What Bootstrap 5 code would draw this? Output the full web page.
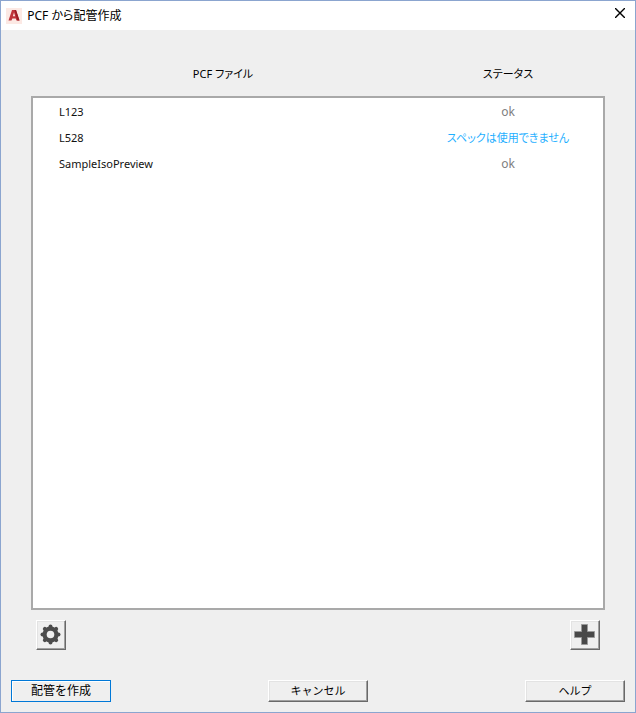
<!DOCTYPE html>
<html lang="ja">
<head>
<meta charset="utf-8">
<meta name="viewport" content="width=device-width, initial-scale=1">
<title>PCF から配管作成</title>
<link href="https://cdn.jsdelivr.net/npm/bootstrap@5.3.0/dist/css/bootstrap.min.css" rel="stylesheet">
<style>
body { font-family: "Noto Sans", "Noto Sans CJK JP", sans-serif; font-size: 12px; line-height: 18px; color: #000; font-feature-settings: "palt"; }
.dialog { background: #efefef; border: 1px solid #8ba5cf; }
.title-bar { height: 29px; padding: 0 10px 0 5px; }
.title-text { font-size: 12px; font-weight: 400; line-height: 18px; }
.close-btn { margin-bottom: 6px; }
.files-area { padding: 34px 30px 0; }
.files thead { height: 32px; padding: 0 2px; }
.files th { font-weight: 400; font-size: 11px; }
.files td { padding: 0; }
.files tbody { border: 2px solid #a9a9a9; background: #fff; padding-top: 1px; }
.files tbody tr { line-height: 26px; }
.files .file-name { padding-left: 26px; color: #111; font-size: 11px; }
.status-ok { color: #808080; }
.status-link { color: #1fb0ff; font-size: 11px; }
.kana { font-size: 11px; }
.tools { padding: 10px 35px 0; }
.raised { background: #efefef; border: 1px solid; border-color: #fff #696969 #696969 #fff; box-shadow: inset -1px -1px #a0a0a0, inset 1px 1px #e3e3e3; padding: 0; color: #000; }
.tool-btn { width: 30px; height: 30px; padding: 0 1px 1px 0; }
.actions { padding: 30px 10px 10px; }
.action-btn { width: 100px; height: 22px; }
.default-btn { border-color: #0078d7; box-shadow: inset 1px 1px #fff; }
</style>
<script src="https://cdn.jsdelivr.net/npm/bootstrap@5.3.0/dist/js/bootstrap.bundle.min.js"></script>
</head>
<body>
<main class="dialog min-vh-100 d-flex flex-column">
  <header class="title-bar bg-white d-flex align-items-center">
    <svg class="me-1" width="16" height="16" viewBox="0 0 16 16" aria-hidden="true">
      <rect width="16" height="16" fill="#fce9e4"/>
      <path d="M6 2h4l3.500 10.500h-3l-.8-2H6.300l-.8 2h-3zM8 4.500 6.900 8.300h2.200z" fill="#c0343a" fill-rule="evenodd"/>
      <path d="M8.500 2H10l3.500 10.500h-2.200z" fill="#9c1c25"/>
    </svg>
    <h1 class="title-text my-0 me-auto">&#8202;PCF から配管作成</h1>
    <button type="button" class="close-btn border-0 bg-transparent p-0 d-flex" aria-label="閉じる">
      <svg width="10" height="10" viewBox="0 0 10 10" stroke="#000" stroke-width="1.4"><path d="M0 0l10 10M10 0L0 10"/></svg>
    </button>
  </header>

  <section class="files-area flex-fill d-flex flex-column">
    <table class="files flex-fill d-flex flex-column w-100">
      <thead class="d-block">
        <tr class="row g-0">
          <th scope="col" class="col-8 text-center">PCF ファイル</th>
          <th scope="col" class="col-4 text-center">ステータス</th>
        </tr>
      </thead>
      <tbody class="flex-fill d-block">
        <tr class="row g-0"><td class="col-8 file-name">L123</td><td class="col-4 text-center status-ok">ok</td></tr>
        <tr class="row g-0"><td class="col-8 file-name">L528</td><td class="col-4 text-center"><a href="#" class="status-link text-decoration-none">スペックは使用できません</a></td></tr>
        <tr class="row g-0"><td class="col-8 file-name">SampleIsoPreview</td><td class="col-4 text-center status-ok">ok</td></tr>
      </tbody>
    </table>
  </section>

  <div class="tools d-flex justify-content-between">
    <button type="button" class="raised tool-btn d-flex align-items-center justify-content-center" aria-label="設定">
      <svg width="21" height="21" viewBox="-10.500 -10.500 21 21">
        <g fill="#4c4c4c">
          <rect x="-2" y="-10" width="4" height="20" rx="2"/>
          <rect x="-2" y="-10" width="4" height="20" rx="2" transform="rotate(45)"/>
          <rect x="-2" y="-10" width="4" height="20" rx="2" transform="rotate(90)"/>
          <rect x="-2" y="-10" width="4" height="20" rx="2" transform="rotate(135)"/>
          <circle r="8"/>
        </g>
        <circle r="3.800" fill="#efefef"/>
      </svg>
    </button>
    <button type="button" class="raised tool-btn d-flex align-items-center justify-content-center" aria-label="追加">
      <svg width="21" height="21" viewBox="0 0 21 21"><path d="M7.500 .5h6v7h7v6h-7v7h-6v-7h-7v-6h7z" fill="#484848" stroke="#999"/></svg>
    </button>
  </div>

  <footer class="actions d-flex justify-content-between">
    <button type="button" class="raised action-btn default-btn d-flex align-items-center justify-content-center">配管を作成</button>
    <button type="button" class="raised action-btn kana d-flex align-items-center justify-content-center">キャンセル</button>
    <button type="button" class="raised action-btn kana d-flex align-items-center justify-content-center">ヘルプ</button>
  </footer>
</main>
</body>
</html>
